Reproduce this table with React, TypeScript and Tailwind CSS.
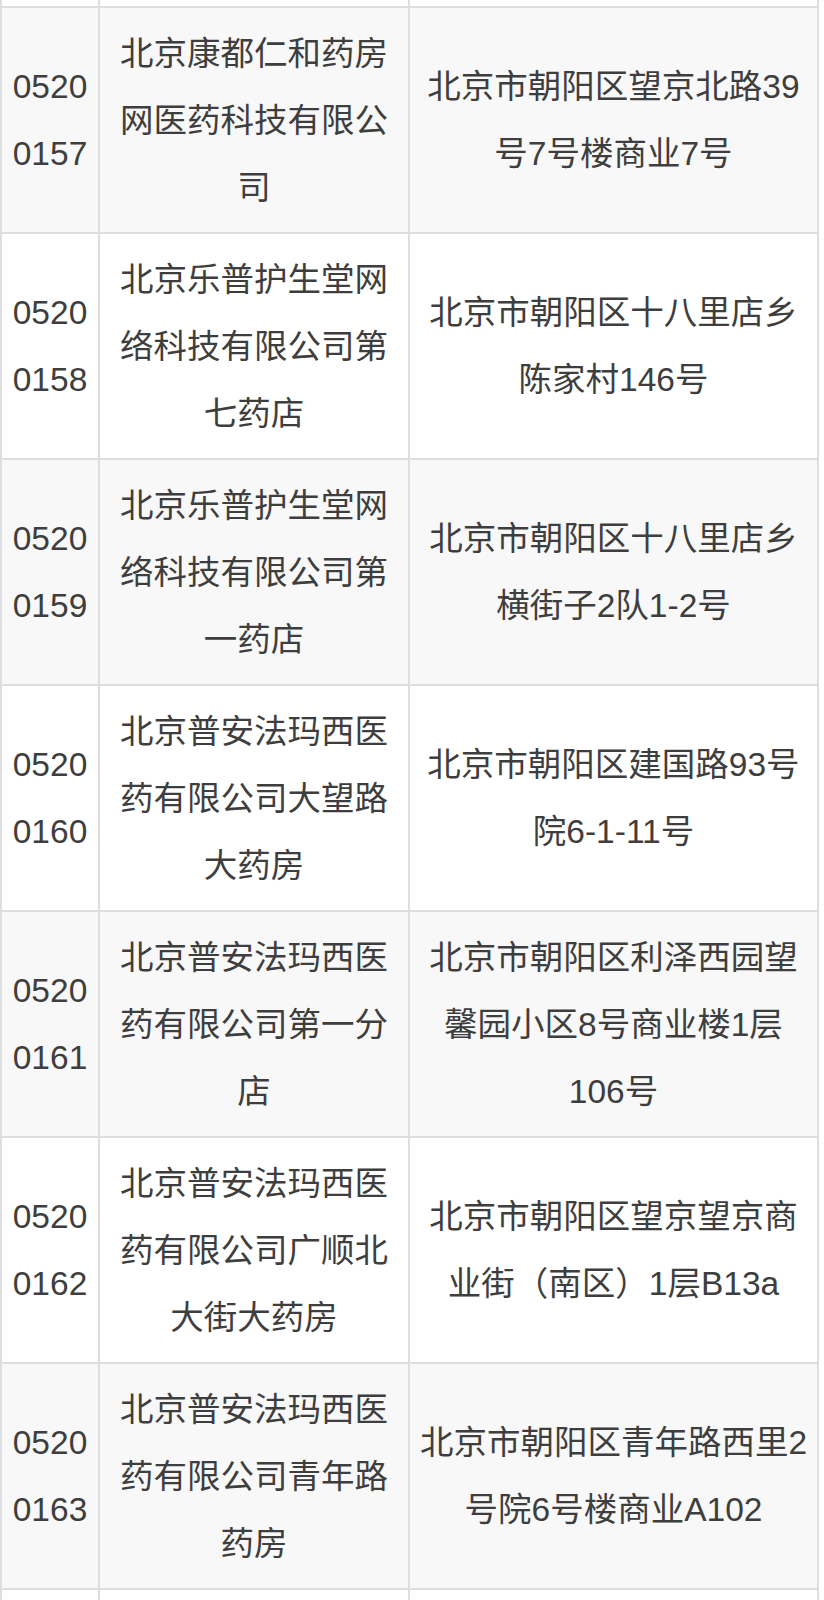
import React from "react";

type Row = { code: [string, string]; name: string[]; addr: string[] };

const rows: Row[] = [
  { code: ["0520", "0157"], name: ["北京康都仁和药房", "网医药科技有限公", "司"], addr: ["北京市朝阳区望京北路39", "号7号楼商业7号"] },
  { code: ["0520", "0158"], name: ["北京乐普护生堂网", "络科技有限公司第", "七药店"], addr: ["北京市朝阳区十八里店乡", "陈家村146号"] },
  { code: ["0520", "0159"], name: ["北京乐普护生堂网", "络科技有限公司第", "一药店"], addr: ["北京市朝阳区十八里店乡", "横街子2队1-2号"] },
  { code: ["0520", "0160"], name: ["北京普安法玛西医", "药有限公司大望路", "大药房"], addr: ["北京市朝阳区建国路93号", "院6-1-11号"] },
  { code: ["0520", "0161"], name: ["北京普安法玛西医", "药有限公司第一分", "店"], addr: ["北京市朝阳区利泽西园望", "馨园小区8号商业楼1层", "106号"] },
  { code: ["0520", "0162"], name: ["北京普安法玛西医", "药有限公司广顺北", "大街大药房"], addr: ["北京市朝阳区望京望京商", "业街（南区）1层B13a"] },
  { code: ["0520", "0163"], name: ["北京普安法玛西医", "药有限公司青年路", "药房"], addr: ["北京市朝阳区青年路西里2", "号院6号楼商业A102"] },
];

const font = { fontFamily: '"Liberation Sans", "Noto Sans CJK SC", sans-serif' };

function Lines({ lines }: { lines: string[] }) {
  return (
    <div className="flex flex-col items-center">
      {lines.map((l, i) => (
        <div key={i} className="whitespace-nowrap leading-[67px]">
          {l}
        </div>
      ))}
    </div>
  );
}

export default function App() {
  return (
    <div className="w-[824px] h-[1600px] overflow-hidden bg-white text-[#3e3e3e] text-[33.5px]" style={font}>
      <div className="w-[819px] border-l-2 border-[#dedede]">
        {/* partial row at top */}
        <div className="grid grid-cols-[98px_310px_409px] h-[8px] border-b-2 border-[#dedede] bg-white">
          <div className="border-r-2 border-[#dedede]" />
          <div className="border-r-2 border-[#dedede]" />
          <div className="border-r-2 border-[#dedede]" />
        </div>
        {rows.map((r, i) => (
          <div
            key={i}
            className={`grid grid-cols-[98px_310px_409px] h-[226px] border-b-2 border-[#dedede] ${i % 2 === 0 ? "bg-[#f8f8f8]" : "bg-white"}`}
          >
            <div className="border-r-2 border-[#dedede] flex items-center justify-center">
              <Lines lines={r.code} />
            </div>
            <div className="border-r-2 border-[#dedede] flex items-center justify-center">
              <Lines lines={r.name} />
            </div>
            <div className="border-r-2 border-[#dedede] flex items-center justify-center">
              <Lines lines={r.addr} />
            </div>
          </div>
        ))}
        <div className="grid grid-cols-[98px_310px_409px] h-[60px] bg-white">
          <div className="border-r-2 border-[#dedede]" />
          <div className="border-r-2 border-[#dedede]" />
          <div className="border-r-2 border-[#dedede]" />
        </div>
      </div>
    </div>
  );
}
